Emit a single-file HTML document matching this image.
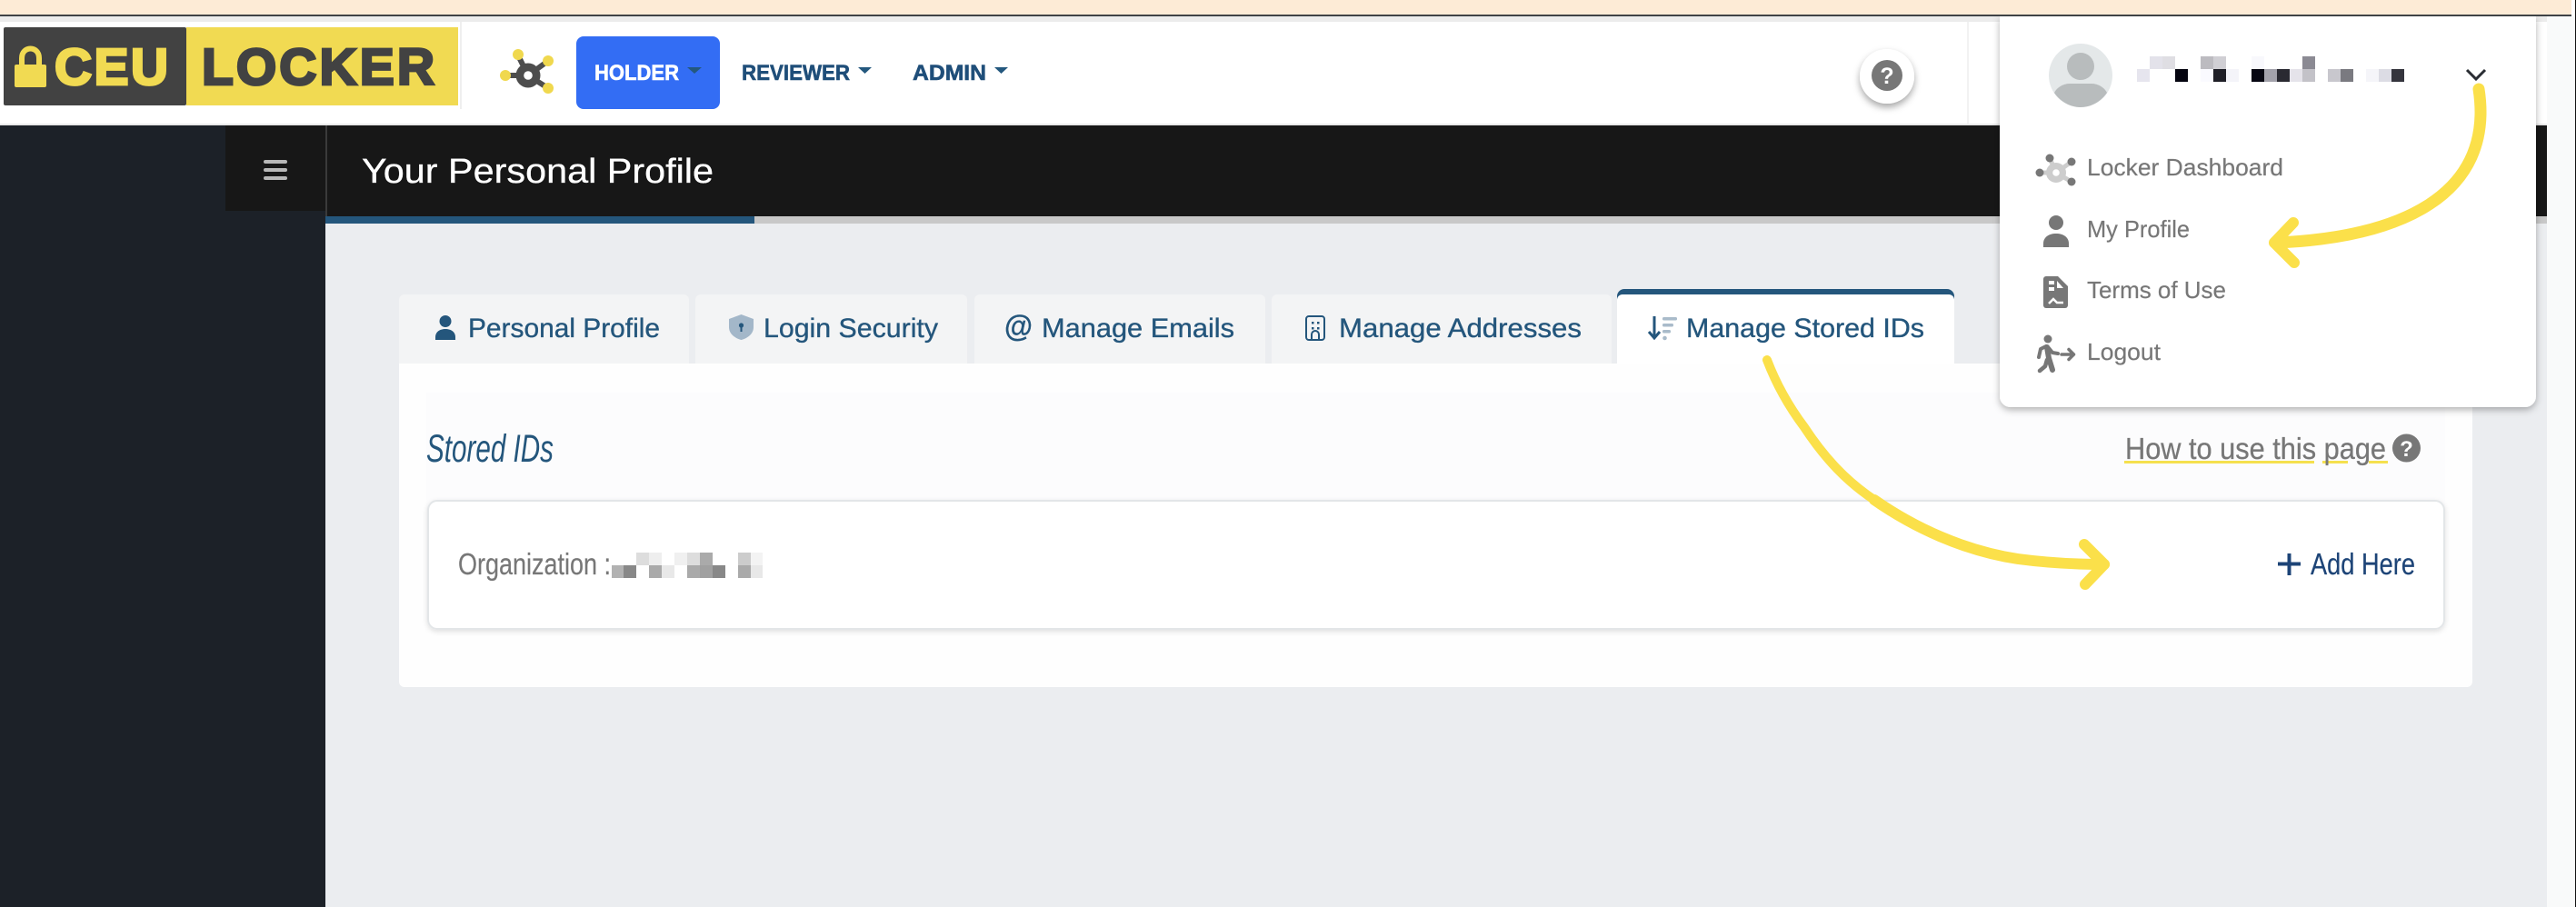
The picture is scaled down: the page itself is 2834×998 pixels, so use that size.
<!DOCTYPE html>
<html><head><meta charset="utf-8"><title>Your Personal Profile</title>
<style>html,body{margin:0;padding:0;background:#fff;overflow:hidden}svg{display:block}text{font-family:"Liberation Sans",sans-serif}</style>
</head><body>
<svg xmlns="http://www.w3.org/2000/svg" width="2834" height="998" viewBox="0 0 2834 998">
<defs>
<filter id="s1" x="-10%" y="-10%" width="120%" height="120%"><feDropShadow dx="0" dy="3" stdDeviation="4" flood-color="#000" flood-opacity=".3"/></filter>
<filter id="s2" x="-40%" y="-40%" width="180%" height="180%"><feDropShadow dx="0" dy="4" stdDeviation="4" flood-color="#000" flood-opacity=".35"/></filter>
<filter id="s3" x="-5%" y="-20%" width="110%" height="140%"><feDropShadow dx="0" dy="2" stdDeviation="3" flood-color="#000" flood-opacity=".12"/></filter>
</defs>
<rect width="2834" height="998" fill="#fff"/>
<rect x="2802" y="18" width="31" height="980" fill="#f9fafa"/>
<rect x="2833" y="0" width="1" height="998" fill="#111"/>
<rect x="0" y="0" width="2829" height="16" fill="#fdebd6"/>
<rect x="0" y="16" width="2829" height="2" fill="#3f4346"/>
<rect x="0" y="18" width="2802" height="6" fill="#ececec"/>
<rect x="0" y="24" width="2802" height="112" fill="#fff"/>
<rect x="0" y="136" width="2802" height="2" fill="#eaeaea"/>
<rect x="506" y="24" width="2" height="96" fill="#efefef"/>
<rect x="2164" y="24" width="2" height="112" fill="#f2f2f2"/>

<!-- logo -->
<rect x="4" y="30" width="201" height="86" rx="2" fill="#424242"/>
<rect x="205" y="30" width="299" height="86" fill="#f1da52"/>
<rect x="16" y="71" width="35" height="25" rx="2" fill="#f1da52"/>
<path d="M24 73V64C24 50 43 50 43 64V73" fill="none" stroke="#f1da52" stroke-width="6"/>
<text x="60" y="93" font-size="57" font-weight="700" fill="#f1da52" stroke="#f1da52" stroke-width="2.800" textLength="125" lengthAdjust="spacing">CEU</text>
<text x="222" y="93" font-size="57" font-weight="700" fill="#424242" stroke="#424242" stroke-width="2.800" textLength="256" lengthAdjust="spacing">LOCKER</text>

<!-- bee icon -->
<g stroke="#4d4d4d" stroke-width="6"><path d="M581 83L570 61M581 83L603 67M581 83L556 83M581 83L603 97"/></g>
<circle cx="581" cy="83" r="13.500" fill="#4d4d4d"/><circle cx="581" cy="83" r="4.800" fill="#fff"/>
<g fill="#f0d84e"><circle cx="570" cy="60" r="6"/><circle cx="603" cy="67" r="6"/><circle cx="556" cy="83" r="6"/><circle cx="603" cy="97" r="6"/></g>

<!-- nav -->
<rect x="634" y="40" width="158" height="80" rx="8" fill="#336df4"/>
<text x="654" y="88" font-size="24" font-weight="700" fill="#fff" stroke="#fff" stroke-width=".6" textLength="93" lengthAdjust="spacingAndGlyphs">HOLDER</text>
<path d="M756 74H772L764 81Z" fill="#24587e"/>
<text x="816" y="88" font-size="24" font-weight="700" fill="#1f4e79" stroke="#1f4e79" stroke-width=".6" textLength="119" lengthAdjust="spacingAndGlyphs">REVIEWER</text>
<path d="M944 74H959L951.500 81Z" fill="#24587e"/>
<text x="1004" y="88" font-size="24" font-weight="700" fill="#1f4e79" stroke="#1f4e79" stroke-width=".6" textLength="81" lengthAdjust="spacingAndGlyphs">ADMIN</text>
<path d="M1094 74H1109L1101.500 81Z" fill="#24587e"/>

<!-- nav help -->
<circle cx="2076" cy="84" r="30" fill="#fff" filter="url(#s2)"/>
<circle cx="2076" cy="83" r="17" fill="#777"/>
<text x="2076" y="92" font-size="25" font-weight="700" fill="#fff" text-anchor="middle">?</text>

<!-- sidebar and header -->
<rect x="0" y="138" width="358" height="860" fill="#1c2128"/>
<rect x="248" y="138" width="110" height="94" fill="#171717"/>
<rect x="290" y="176" width="26" height="4" rx="2" fill="#b8b8b8"/>
<rect x="290" y="185" width="26" height="4" rx="2" fill="#b8b8b8"/>
<rect x="290" y="194" width="26" height="4" rx="2" fill="#b8b8b8"/>
<rect x="358" y="138" width="2444" height="100" fill="#171717"/>
<rect x="358" y="138" width="2" height="100" fill="#3a3a3a"/>
<text x="398" y="201" font-size="38" fill="#fff" stroke="#fff" stroke-width=".3" textLength="387" lengthAdjust="spacingAndGlyphs">Your Personal Profile</text>
<rect x="358" y="238" width="472" height="8" fill="#24567c"/>
<rect x="830" y="238" width="1972" height="8" fill="#c8c8c8"/>
<rect x="358" y="246" width="2444" height="752" fill="#ebedf0"/>

<!-- tabs -->
<g fill="#f3f4f5">
<path d="M439 400V330a6 6 0 0 1 6-6H752a6 6 0 0 1 6 6V400Z"/>
<path d="M765 400V330a6 6 0 0 1 6-6H1058a6 6 0 0 1 6 6V400Z"/>
<path d="M1072 400V330a6 6 0 0 1 6-6H1386a6 6 0 0 1 6 6V400Z"/>
<path d="M1399 400V330a6 6 0 0 1 6-6H1767a6 6 0 0 1 6 6V400Z"/>
</g>
<path d="M1779 400V326a8 8 0 0 1 8-8H2142a8 8 0 0 1 8 8V400Z" fill="#24567c"/>
<path d="M1779 400V330a6 6 0 0 1 6-6H2144a6 6 0 0 1 6 6V400Z" fill="#fff"/>
<path d="M439 400H2720V750a6 6 0 0 1-6 6H445a6 6 0 0 1-6-6Z" fill="#fefefe"/>
<rect x="469" y="432" width="2221" height="250" fill="#fcfcfd"/>

<g fill="#24567c" stroke="#24567c" stroke-width=".35">
<text x="515" y="371" font-size="29.500" textLength="211" lengthAdjust="spacingAndGlyphs">Personal Profile</text>
<text x="840" y="371" font-size="29.500" textLength="192" lengthAdjust="spacingAndGlyphs">Login Security</text>
<text x="1146" y="371" font-size="29.500" textLength="212" lengthAdjust="spacingAndGlyphs">Manage Emails</text>
<text x="1473" y="371" font-size="29.500" textLength="267" lengthAdjust="spacingAndGlyphs">Manage Addresses</text>
<text x="1855" y="371" font-size="29.500" textLength="262" lengthAdjust="spacingAndGlyphs">Manage Stored IDs</text>
</g>
<g fill="#24567c">
<!-- person -->
<circle cx="490" cy="353.500" r="6.500"/>
<path d="M479 374V371C479 365 484 362 490 362S501 365 501 371V374Z"/>
<!-- @ -->
<text x="1105" y="370" font-size="33" font-weight="700" stroke="#24567c" stroke-width=".2" textLength="31" lengthAdjust="spacingAndGlyphs">@</text>
<!-- sort -->
<path d="M1820 348V372M1814 365L1820 372L1826 365" fill="none" stroke="#24567c" stroke-width="3"/>
</g>
<path d="M815.500 346L829 351V360C829 367 823 372 815.500 374C808 372 802 367 802 360V351Z" fill="#a3b7c9"/>
<circle cx="815.500" cy="358" r="2.600" fill="#24567c"/><rect x="814.500" y="359" width="2" height="6" fill="#24567c"/>
<rect x="1437" y="348" width="20" height="26" rx="3" fill="none" stroke="#24567c" stroke-width="2"/>
<g fill="#24567c"><rect x="1443" y="354" width="2.500" height="2.500"/><rect x="1449" y="354" width="2.500" height="2.500"/><rect x="1443" y="360" width="2.500" height="2.500"/><rect x="1449" y="360" width="2.500" height="2.500"/></g>
<path d="M1443 373V368a4 4 0 0 1 8 0V373" fill="none" stroke="#24567c" stroke-width="2"/>
<g fill="#a9bbca"><rect x="1829" y="349" width="16" height="3.500" rx="1.500"/><rect x="1829" y="356" width="12" height="3.500" rx="1.500"/><rect x="1829" y="363" width="9" height="3.500" rx="1.500"/><circle cx="1831.500" cy="372" r="2.300"/></g>

<text x="469" y="508" font-size="43" font-style="italic" fill="#24567c" textLength="140" lengthAdjust="spacingAndGlyphs">Stored IDs</text>

<!-- how to -->
<g fill="#f5e04e"><rect x="2337" y="507" width="209" height="3"/><rect x="2555" y="507" width="28" height="3"/><rect x="2606" y="507" width="21" height="3"/></g>
<text x="2338" y="505" font-size="33" fill="#777" stroke="#777" stroke-width=".3" textLength="287" lengthAdjust="spacingAndGlyphs">How to use this page</text>
<circle cx="2647.500" cy="493" r="15.500" fill="#777"/>
<text x="2647.500" y="502" font-size="24" font-weight="700" fill="#fff" text-anchor="middle">?</text>

<!-- inner card -->
<rect x="471" y="551" width="2218" height="141" rx="10" fill="#fff" stroke="#e3e6e8" stroke-width="2" filter="url(#s3)"/>
<text x="504" y="632" font-size="33" fill="#777" stroke="#777" stroke-width=".2" textLength="168" lengthAdjust="spacingAndGlyphs">Organization :</text>
<g>
<rect x="673" y="622" width="13" height="14" fill="#aaa" opacity=".9"/><rect x="686" y="622" width="14" height="14" fill="#888"/>
<rect x="700" y="608" width="14" height="14" fill="#ddd"/><rect x="714" y="608" width="14" height="14" fill="#eee"/><rect x="714" y="622" width="14" height="14" fill="#aaa"/><rect x="728" y="622" width="14" height="14" fill="#e8e8e8"/>
<rect x="742" y="608" width="14" height="14" fill="#f0f0f0"/><rect x="756" y="608" width="14" height="14" fill="#ddd"/><rect x="756" y="622" width="14" height="14" fill="#aaa"/>
<rect x="770" y="608" width="14" height="14" fill="#aaa"/><rect x="770" y="622" width="14" height="14" fill="#a0a0a0"/><rect x="784" y="622" width="14" height="14" fill="#888"/>
<rect x="812" y="608" width="14" height="14" fill="#ccc"/><rect x="812" y="622" width="14" height="14" fill="#aaa"/><rect x="826" y="608" width="13" height="14" fill="#f3f3f3"/><rect x="826" y="622" width="13" height="14" fill="#e8e8e8"/>
</g>
<path d="M2506 620.500H2531M2518.500 609V633" stroke="#1d4477" stroke-width="4" fill="none"/>
<text x="2542" y="632" font-size="33" fill="#1d4477" stroke="#1d4477" stroke-width=".2" textLength="115" lengthAdjust="spacingAndGlyphs">Add Here</text>

<!-- dropdown -->
<path d="M2200 18H2790V436a12 12 0 0 1-12 12H2212a12 12 0 0 1-12-12Z" fill="#fff" filter="url(#s1)"/>
<rect x="2190" y="0" width="610" height="16" fill="#fdebd6"/>
<rect x="2190" y="16" width="610" height="2" fill="#3f4346"/>
<circle cx="2289" cy="83" r="35" fill="#e4e8e9"/>
<ellipse cx="2289" cy="73" rx="15" ry="15" fill="#b8bcbd"/>
<path d="M2260 102C2263 96 2270 92 2277 92H2301C2308 92 2315 96 2318 102C2312 111 2301 118 2289 118S2266 111 2260 102Z" fill="#b8bcbd"/>
<g>
<rect x="2365" y="62" width="14" height="14" fill="#e3e2ea"/><rect x="2379" y="62" width="14" height="14" fill="#dfdee3"/>
<rect x="2421" y="62" width="14" height="14" fill="#bcbbc0"/><rect x="2435" y="62" width="14" height="14" fill="#d0cfd4"/>
<rect x="2477" y="62" width="14" height="14" fill="#f8f8fc"/><rect x="2533" y="62" width="14" height="14" fill="#8b8a93"/>
<rect x="2351" y="76" width="14" height="14" fill="#e6e5ee"/><rect x="2393" y="76" width="14" height="14" fill="#050510"/>
<rect x="2421" y="76" width="14" height="14" fill="#fafaff"/><rect x="2435" y="76" width="14" height="14" fill="#1f1f27"/><rect x="2449" y="76" width="14" height="14" fill="#f4f4f9"/>
<rect x="2477" y="76" width="14" height="14" fill="#070712"/><rect x="2491" y="76" width="14" height="14" fill="#a3a2ab"/><rect x="2505" y="76" width="14" height="14" fill="#2a2a32"/><rect x="2519" y="76" width="14" height="14" fill="#e5e3ea"/><rect x="2533" y="76" width="14" height="14" fill="#c3c2c8"/>
<rect x="2561" y="76" width="14" height="14" fill="#c8c7cd"/><rect x="2575" y="76" width="14" height="14" fill="#7a7a80"/>
<rect x="2603" y="76" width="14" height="14" fill="#f5f5f9"/><rect x="2617" y="76" width="14" height="14" fill="#dcdce4"/><rect x="2631" y="76" width="14" height="14" fill="#35353d"/>
</g>
<path d="M2714 77L2724 87L2734 77" fill="none" stroke="#2a2d33" stroke-width="3"/>

<g fill="#777" stroke="#777" stroke-width=".2">
<text x="2296" y="193" font-size="26" textLength="216" lengthAdjust="spacingAndGlyphs">Locker Dashboard</text>
<text x="2296" y="261" font-size="26" textLength="113" lengthAdjust="spacingAndGlyphs">My Profile</text>
<text x="2296" y="328" font-size="26" textLength="153" lengthAdjust="spacingAndGlyphs">Terms of Use</text>
<text x="2296" y="396" font-size="26" textLength="81" lengthAdjust="spacingAndGlyphs">Logout</text>
</g>
<!-- locker icon -->
<g stroke="#cdcdcd" stroke-width="5"><path d="M2262 190L2255 174M2262 190L2279 178M2262 190L2244 190M2262 190L2279 200"/></g>
<circle cx="2262" cy="190" r="11" fill="#cdcdcd"/><circle cx="2262" cy="190" r="3.800" fill="#fff"/>
<g fill="#777"><circle cx="2255" cy="174" r="4.500"/><circle cx="2279" cy="178" r="4.500"/><circle cx="2244" cy="190" r="4.500"/><circle cx="2279" cy="200" r="4.500"/></g>
<!-- profile icon -->
<circle cx="2262" cy="245" r="8" fill="#777"/>
<path d="M2248 272V268C2248 261 2254 257 2262 257S2276 261 2276 268V272Z" fill="#777"/>
<!-- doc icon -->
<path d="M2251 304H2264L2275 315V336a3 3 0 0 1-3 3H2251a3 3 0 0 1-3-3V307a3 3 0 0 1 3-3Z" fill="#777"/>
<g fill="#fff"><rect x="2254" y="309" width="6" height="4"/><path d="M2263 309L2270 317H2263Z"/><rect x="2254" y="316" width="6" height="4"/></g>
<path d="M2254 334L2259 329L2263 333H2270" fill="none" stroke="#fff" stroke-width="2.500"/>
<!-- logout icon -->
<circle cx="2253" cy="373" r="4.500" fill="#777"/>
<g fill="none" stroke="#777" stroke-linecap="round" stroke-linejoin="round">
<path stroke-width="6" d="M2252 382L2254 394L2258 407"/>
<path stroke-width="4" d="M2251 381L2245 384L2243 393"/>
<path stroke-width="4" d="M2254 383L2258 388L2264 389"/>
<path stroke-width="4.500" d="M2252 396L2250 403L2244 408"/>
<path stroke-width="3.500" d="M2268 390H2281M2276 384.500L2281.500 390L2276 395.500"/>
</g>

<!-- yellow arrows -->
<g fill="none" stroke="#fbe04a" stroke-linecap="round" stroke-linejoin="round">
<path stroke-width="13" d="M2727 98C2745 215 2640 262 2503 267"/>
<path stroke-width="12" d="M2523 245L2502 267L2524 289"/>
<path stroke-width="10" d="M1944 396C1955 425 1970 450 1985 470C2008 505 2032 530 2062 550"/>
<path stroke-width="12" d="M2062 550C2105 580 2160 606 2220 615C2250 619 2285 621 2315 621"/>
<path stroke-width="12" d="M2293 599L2315 621L2294 643"/>
</g>
</svg>
</body></html>
